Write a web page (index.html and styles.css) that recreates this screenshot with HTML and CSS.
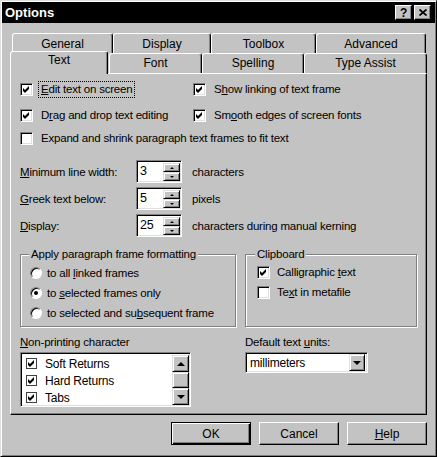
FILE: index.html
```html
<!DOCTYPE html>
<html lang="en">
<head>
  <meta charset="UTF-8">
  <meta name="viewport" content="width=device-width, initial-scale=1.0">
  <title>Options</title>
  <link rel="stylesheet" href="styles.css">
</head>
<body>
  <div class="window">
    <div class="titlebar">
      <span class="title">Options</span>
      <div class="title-buttons">
        <span class="tbtn help-btn">?</span>
        <span class="tbtn close-btn">
          <svg width="8" height="7" viewBox="0 0 8 7"><path d="M0.5 0.5L7.5 6.5M7.5 0.5L0.5 6.5" stroke="#000" stroke-width="1.7"/></svg>
        </span>
      </div>
    </div>

    <div class="tabrow back">
      <div class="tab tab-general">General</div>
      <div class="tab tab-display">Display</div>
      <div class="tab tab-toolbox">Toolbox</div>
      <div class="tab tab-advanced">Advanced</div>
    </div>
    <div class="tabrow front">
      <div class="tab tab-text active">Text</div>
      <div class="tab tab-font">Font</div>
      <div class="tab tab-spelling">Spelling</div>
      <div class="tab tab-assist">Type Assist</div>
    </div>

    <div class="panel">
      <div class="checks">
        <div class="check">
          <span class="cb"><svg viewBox="0 0 7 7"><polygon points="0,2 2,4 6,0 6,3 2,7 0,5"/></svg></span>
          <span class="lbl focus"><u>E</u>dit text on screen</span>
        </div>
        <div class="check">
          <span class="cb"><svg viewBox="0 0 7 7"><polygon points="0,2 2,4 6,0 6,3 2,7 0,5"/></svg></span>
          <span class="lbl">S<u>h</u>ow linking of text frame</span>
        </div>
        <div class="check">
          <span class="cb"><svg viewBox="0 0 7 7"><polygon points="0,2 2,4 6,0 6,3 2,7 0,5"/></svg></span>
          <span class="lbl">D<u>r</u>ag and drop text editing</span>
        </div>
        <div class="check">
          <span class="cb"><svg viewBox="0 0 7 7"><polygon points="0,2 2,4 6,0 6,3 2,7 0,5"/></svg></span>
          <span class="lbl">Sm<u>o</u>oth edges of screen fonts</span>
        </div>
        <div class="check wide">
          <span class="cb"></span>
          <span class="lbl">Expand and shrink paragraph text frames to fit text</span>
        </div>
      </div>

      <div class="spins">
        <div class="spin-row">
          <span class="spin-label"><u>M</u>inimum line width:</span>
          <div class="spinbox">
            <span class="spin-value">3</span>
            <div class="spin-btns">
              <span class="sbtn"><i class="tri-up"></i></span>
              <span class="sbtn"><i class="tri-down"></i></span>
            </div>
          </div>
          <span class="spin-unit">characters</span>
        </div>
        <div class="spin-row">
          <span class="spin-label"><u>G</u>reek text below:</span>
          <div class="spinbox">
            <span class="spin-value">5</span>
            <div class="spin-btns">
              <span class="sbtn"><i class="tri-up"></i></span>
              <span class="sbtn"><i class="tri-down"></i></span>
            </div>
          </div>
          <span class="spin-unit">pixels</span>
        </div>
        <div class="spin-row">
          <span class="spin-label"><u>D</u>isplay:</span>
          <div class="spinbox">
            <span class="spin-value">25</span>
            <div class="spin-btns">
              <span class="sbtn"><i class="tri-up"></i></span>
              <span class="sbtn"><i class="tri-down"></i></span>
            </div>
          </div>
          <span class="spin-unit">characters during manual kerning</span>
        </div>
      </div>

      <div class="groups">
        <fieldset class="group group-apply">
          <legend>Apply paragraph frame formatting</legend>
          <div class="opt"><span class="radio"></span><span>to all <u>l</u>inked frames</span></div>
          <div class="opt"><span class="radio on"></span><span>to <u>s</u>elected frames only</span></div>
          <div class="opt"><span class="radio"></span><span>to selected and su<u>b</u>sequent frame</span></div>
        </fieldset>
        <fieldset class="group group-clip">
          <legend>Clipboard</legend>
          <div class="opt">
            <span class="cb"><svg viewBox="0 0 7 7"><polygon points="0,2 2,4 6,0 6,3 2,7 0,5"/></svg></span>
            <span>Calligraphic <u>t</u>ext</span>
          </div>
          <div class="opt">
            <span class="cb"></span>
            <span>Te<u>x</u>t in metafile</span>
          </div>
        </fieldset>
      </div>

      <div class="bottom">
        <div class="col-list">
          <div class="field-label"><u>N</u>on-printing character</div>
          <div class="listbox">
            <div class="list-items">
              <div class="list-item"><span class="lcb"><svg viewBox="0 0 7 7"><polygon points="0,2 2,4 6,0 6,3 2,7 0,5"/></svg></span>Soft Returns</div>
              <div class="list-item"><span class="lcb"><svg viewBox="0 0 7 7"><polygon points="0,2 2,4 6,0 6,3 2,7 0,5"/></svg></span>Hard Returns</div>
              <div class="list-item"><span class="lcb"><svg viewBox="0 0 7 7"><polygon points="0,2 2,4 6,0 6,3 2,7 0,5"/></svg></span>Tabs</div>
            </div>
            <div class="scrollbar">
              <span class="sb-btn"><i class="tri-up big"></i></span>
              <span class="sb-thumb"></span>
              <span class="sb-track"></span>
              <span class="sb-btn"><i class="tri-down big"></i></span>
            </div>
          </div>
        </div>
        <div class="col-units">
          <div class="field-label">Default text <u>u</u>nits:</div>
          <div class="combo">
            <span class="combo-value">millimeters</span>
            <span class="combo-btn"><i class="tri-down big"></i></span>
          </div>
        </div>
      </div>
    </div>

    <div class="buttons">
      <button class="btn default">OK</button>
      <button class="btn">Cancel</button>
      <button class="btn"><u>H</u>elp</button>
    </div>
  </div>
</body>
</html>
```

FILE: styles.css
```css
* {
  box-sizing: border-box;
}
body {
  margin: 0;
  font-family: "Liberation Sans", Arial, sans-serif;
  font-size: 11.5px;
  letter-spacing: -0.2px;
  color: #000;
  background: #c3c3c3;
}
u {
  text-decoration: underline;
  text-underline-offset: 1px;
}

/* window frame */
.window {
  width: 437px;
  height: 457px;
  background: #c3c3c3;
  border: 1px solid;
  border-color: #dfdfdf #000 #000 #dfdfdf;
  box-shadow: inset 1px 1px #fff, inset -1px -1px #808080;
  padding: 1px;
  display: flex;
  flex-direction: column;
}
.titlebar {
  height: 21px;
  background: #000;
  color: #fff;
  display: flex;
  align-items: center;
  justify-content: space-between;
  padding: 0 4px 0 3px;
}
.title {
  font-weight: bold;
  font-size: 13px;
  letter-spacing: 0;
}
.title-buttons {
  display: flex;
  gap: 2px;
}
.tbtn {
  width: 17px;
  height: 15px;
  background: #c3c3c3;
  color: #000;
  border: 1px solid;
  border-color: #fff #000 #000 #fff;
  box-shadow: inset -1px -1px #808080;
  display: flex;
  align-items: center;
  justify-content: center;
  font-weight: bold;
  font-size: 12px;
  line-height: 1;
}

/* tabs */
.tabrow {
  display: flex;
  height: 20px;
}
.tabrow.back {
  margin: 10px 0 0 10px;
}
.tabrow.front {
  margin-left: 8px;
}
.tab {
  height: 20px;
  border: 1px solid;
  border-bottom: none;
  border-color: #fff #000 transparent #fff;
  border-radius: 3px 3px 0 0;
  box-shadow: inset -1px 0 #808080;
  text-align: center;
  font-size: 12px;
  letter-spacing: 0;
  line-height: 18px;
  background: #c3c3c3;
}
.back .tab {
  line-height: 20px;
}
.tab-general { width: 101px; }
.tab-display { width: 98px; }
.tab-toolbox { width: 105px; }
.tab-advanced { width: 110px; }
.tab-text { width: 98px; }
.tab-font { width: 93px; margin-left: 1px; }
.tab-spelling { width: 102px; }
.tab-assist { width: 123px; }
.tab.active {
  position: relative;
  z-index: 1;
  height: 23px;
  margin-top: -2px;
  line-height: 16px;
}

/* main panel */
.panel {
  margin-left: 8px;
  width: 417px;
  height: 342px;
  border: 1px solid;
  border-color: #fff #000 #000 #fff;
  box-shadow: inset -1px -1px #808080;
  padding-left: 9px;
}
.checks {
  display: grid;
  grid-template-columns: 173px 1fr;
  grid-template-rows: 26px 23px 18px;
  margin-top: 6px;
}
.check {
  display: flex;
  align-items: center;
  height: 18px;
  gap: 5px;
}
.check.wide {
  grid-column: 1 / -1;
}
.lbl {
  padding: 0 2px;
  border: 1px dotted transparent;
  line-height: 15px;
}
.lbl.focus {
  border-color: #000;
}
.cb {
  width: 13px;
  height: 13px;
  flex: none;
  background: #fff;
  border: 1px solid;
  border-color: #808080 #fff #fff #808080;
  box-shadow: inset 1px 1px #000, inset -1px -1px #dfdfdf;
  display: flex;
  align-items: center;
  justify-content: center;
}
.cb svg,
.lcb svg {
  width: 7px;
  height: 7px;
  fill: #000;
}

/* spinners */
.spins {
  margin-top: 13px;
  display: flex;
  flex-direction: column;
  gap: 4px;
}
.spin-row {
  display: flex;
  align-items: center;
  height: 23px;
}
.spin-label {
  width: 116px;
}
.spinbox {
  width: 46px;
  height: 23px;
  background: #fff;
  border: 1px solid;
  border-color: #808080 #fff #fff #808080;
  box-shadow: inset 1px 1px #000, inset -1px -1px #dfdfdf;
  padding: 2px 1px 1px 2px;
  display: flex;
}
.spin-value {
  flex: 1;
  font-size: 12.5px;
  padding-left: 1px;
  line-height: 17px;
}
.spin-btns {
  width: 17px;
  display: flex;
  flex-direction: column;
}
.sbtn {
  flex: 1;
  background: #c3c3c3;
  border: 1px solid;
  border-color: #dfdfdf #000 #000 #dfdfdf;
  box-shadow: inset 1px 1px #fff, inset -1px -1px #808080;
  display: flex;
  align-items: center;
  justify-content: center;
}
.spin-unit {
  margin-left: 10px;
}
.tri-up,
.tri-down {
  width: 0;
  height: 0;
  border-left: 2px solid transparent;
  border-right: 2px solid transparent;
}
.tri-up { border-bottom: 2px solid #000; }
.tri-down { border-top: 2px solid #000; }
.tri-up.big,
.tri-down.big {
  border-left-width: 4px;
  border-right-width: 4px;
}
.tri-up.big { border-bottom-width: 4px; }
.tri-down.big { border-top-width: 4px; }

/* group boxes */
.groups {
  display: flex;
  margin-top: 10px;
}
.group {
  margin: 0;
  height: 80px;
  border: 1px solid #808080;
  box-shadow: inset 1px 1px #fff, 1px 1px #fff;
  padding: 2px 0 0 9px;
}
.group legend {
  position: relative;
  background: #c3c3c3;
  padding: 0 2px;
  margin-left: -1px;
  line-height: 14px;
}
.group-apply {
  width: 216px;
}
.group-clip {
  width: 172px;
  margin-left: 9px;
  padding-left: 11px;
  padding-top: 1px;
}
.group-clip legend {
  margin-left: -2px;
}
.opt {
  display: flex;
  align-items: center;
  height: 20px;
  gap: 5px;
}
.group-clip .opt {
  gap: 7px;
}
.radio {
  width: 12px;
  height: 12px;
  flex: none;
  border-radius: 50%;
  background: #fff;
  border: 1px solid;
  border-color: #808080 #fff #fff #808080;
  box-shadow: inset 1px 1px #000, 0 0 0 0.5px #c3c3c3;
  display: flex;
  align-items: center;
  justify-content: center;
}
.radio.on::after {
  content: "";
  width: 4px;
  height: 4px;
  border-radius: 50%;
  background: #000;
}

/* list and combo */
.bottom {
  display: flex;
  margin-top: 8px;
}
.field-label {
  line-height: 14px;
  margin-bottom: 3px;
}
.col-list {
  width: 171px;
}
.col-units {
  margin-left: 54px;
}
.listbox {
  height: 55px;
  background: #fff;
  border: 1px solid;
  border-color: #808080 #fff #fff #808080;
  box-shadow: inset 1px 1px #000, inset -1px -1px #dfdfdf;
  padding: 2px 1px 1px 2px;
  display: flex;
}
.list-items {
  flex: 1;
}
.list-item {
  height: 17px;
  display: flex;
  align-items: center;
  gap: 8px;
  padding-left: 3px;
  font-size: 12px;
}
.lcb {
  width: 11px;
  height: 11px;
  border: 1px solid #404040;
  background: #fff;
  display: flex;
  align-items: center;
  justify-content: center;
}
.scrollbar {
  width: 17px;
  display: flex;
  flex-direction: column;
  background: #e6e6e6;
}
.sb-btn,
.sb-thumb {
  background: #c3c3c3;
  border: 1px solid;
  border-color: #dfdfdf #000 #000 #dfdfdf;
  box-shadow: inset 1px 1px #fff, inset -1px -1px #808080;
  display: flex;
  align-items: center;
  justify-content: center;
}
.sb-btn {
  height: 17px;
}
.sb-thumb {
  height: 16px;
}
.sb-track {
  flex: 1;
}
.combo {
  width: 123px;
  height: 21px;
  background: #fff;
  border: 1px solid;
  border-color: #808080 #fff #fff #808080;
  box-shadow: inset 1px 1px #000, inset -1px -1px #dfdfdf;
  padding: 2px 2px 2px 2px;
  display: flex;
  align-items: center;
}
.combo-value {
  flex: 1;
  padding-left: 2px;
  font-size: 12px;
}
.combo-btn {
  width: 16px;
  height: 17px;
  background: #c3c3c3;
  border: 1px solid;
  border-color: #dfdfdf #000 #000 #dfdfdf;
  box-shadow: inset 1px 1px #fff, inset -1px -1px #808080;
  display: flex;
  align-items: center;
  justify-content: center;
}

/* dialog buttons */
.buttons {
  display: flex;
  justify-content: flex-end;
  gap: 8px;
  margin-top: 7px;
  padding-right: 8px;
}
.btn {
  width: 80px;
  height: 23px;
  font: inherit;
  font-size: 12px;
  letter-spacing: 0;
  color: #000;
  background: #c3c3c3;
  border: 1px solid;
  border-color: #fff #000 #000 #fff;
  box-shadow: inset -1px -1px #808080;
  padding: 0;
}
.btn.default {
  border-color: #000;
  box-shadow: inset 1px 1px #fff, inset -1px -1px #000, inset -2px -2px #808080;
}
```
